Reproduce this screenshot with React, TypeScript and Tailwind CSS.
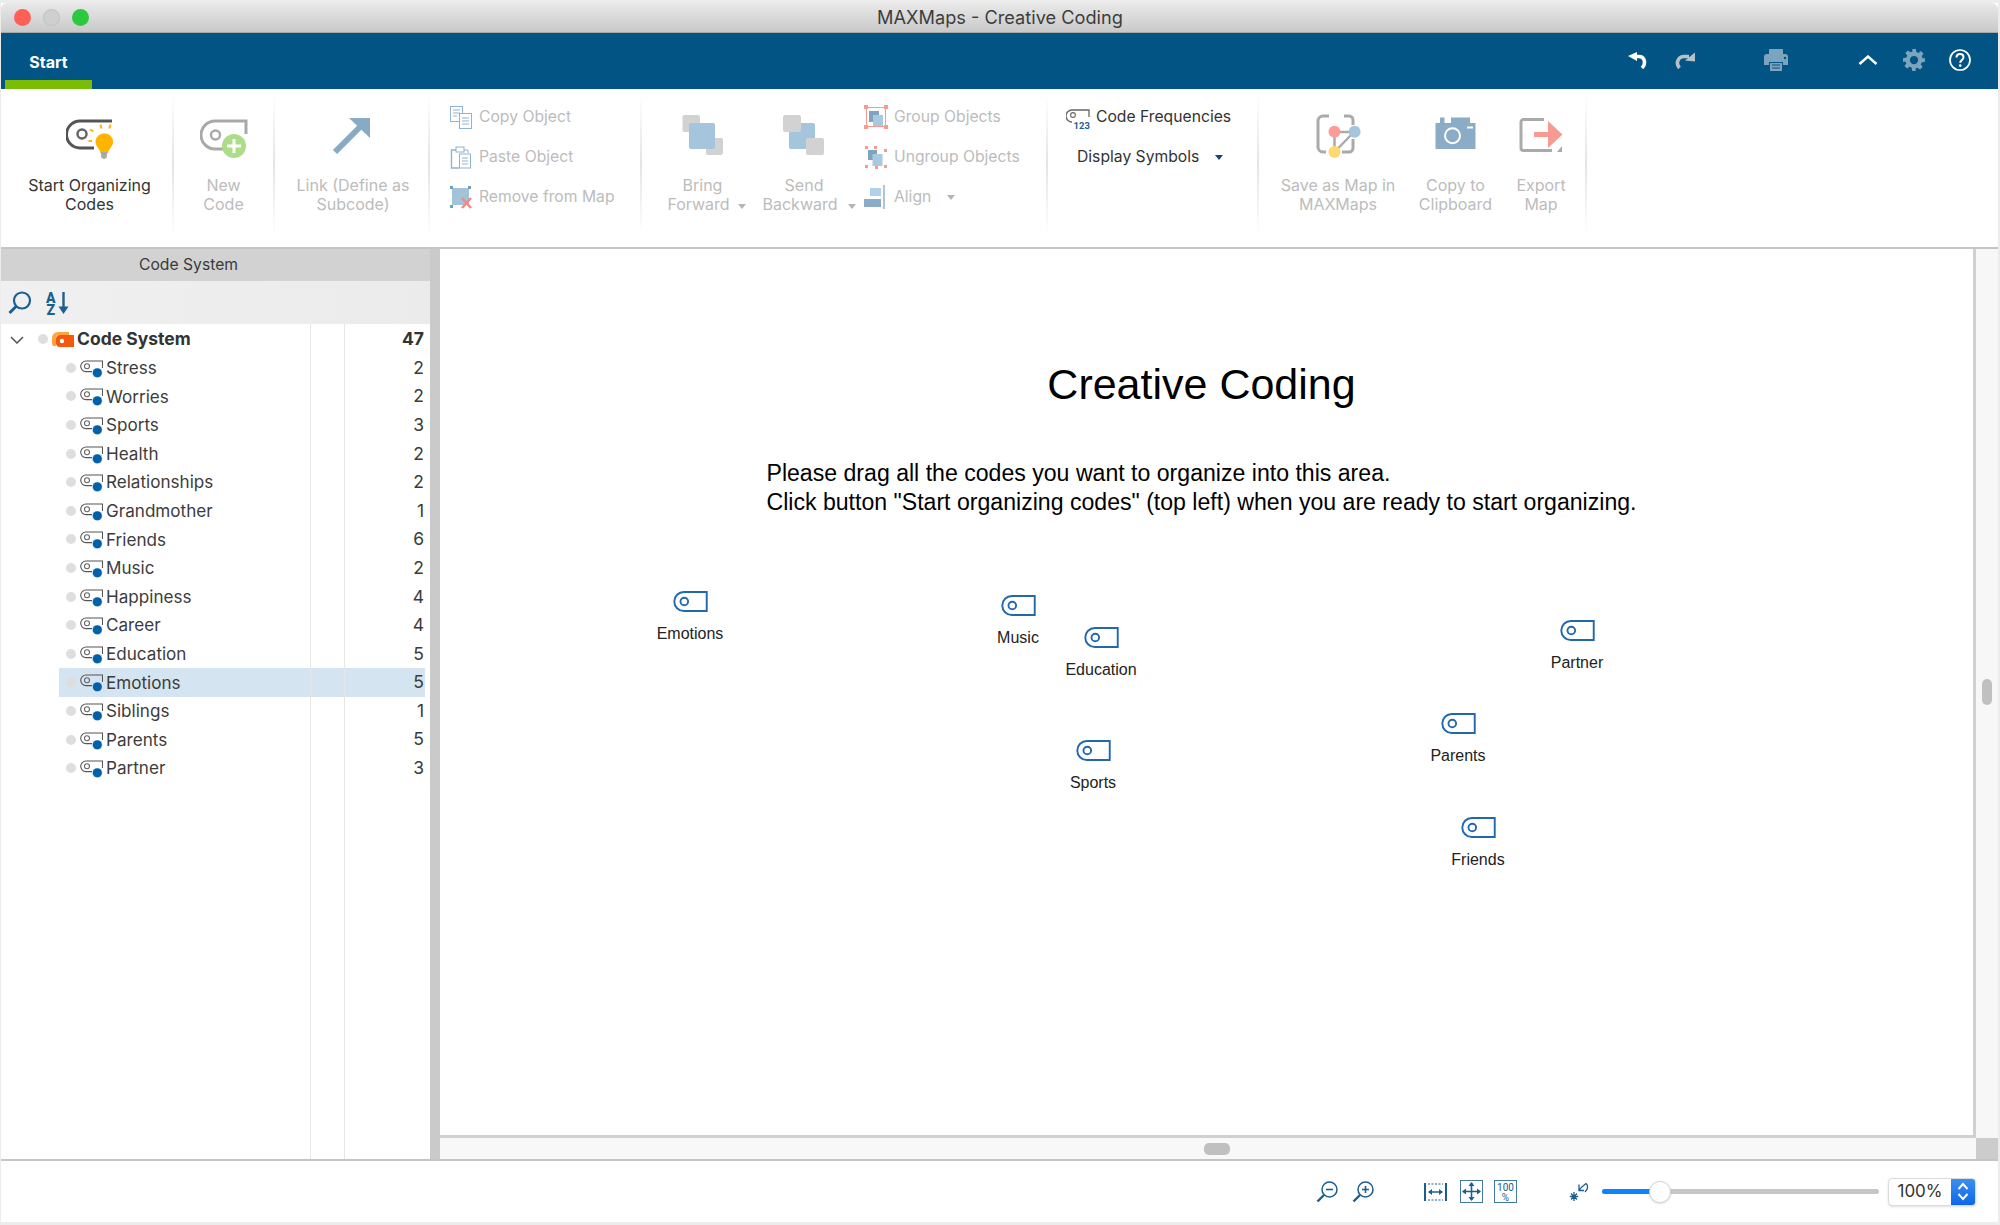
import React from "react";

const dis = "text-[#bcbcbc]";

function Sep() {
  return <div className="w-[2px] self-stretch my-[5px] mb-[12px] bg-gradient-to-b from-white via-[#e4e4e4] to-white shrink-0" />;
}

function Caret({ color = "#b5b5b5", className = "" }: { color?: string; className?: string }) {
  return (
    <svg width="8" height="5" viewBox="0 0 8 5" className={className}>
      <path d="M0 0H8L4 5Z" fill={color} />
    </svg>
  );
}

function Large({ w, icon, lines, dark, extra }: { w: string; icon: React.ReactNode; lines: React.ReactNode[]; dark?: boolean; extra?: string }) {
  return (
    <div className={`${w} ${extra ?? ""} shrink-0 flex flex-col items-center pt-[25px] text-[16px] leading-[19px] ${dark ? "text-[#333]" : dis}`}>
      <div className="h-[48px] w-[48px] mb-[14px]">{icon}</div>
      {lines.map((l, i) => (
        <div key={i} className="whitespace-nowrap">{l}</div>
      ))}
    </div>
  );
}

function Small({ icon, label, dark, caret }: { icon: React.ReactNode; label: string; dark?: boolean; caret?: boolean }) {
  return (
    <div className={`h-[40px] flex items-center text-[15.7px] whitespace-nowrap ${dark ? "text-[#333]" : dis}`}>
      <div className="w-[24px] h-[24px] mr-[6px] shrink-0">{icon}</div>
      <span>{label}</span>
      {caret && <Caret className="ml-[16px]" />}
    </div>
  );
}

const S = ({ children, w = 48 }: { children: React.ReactNode; w?: number }) => (
  <svg width={w} height={w} viewBox={`0 0 ${w} ${w}`} className="block" fill="none">{children}</svg>
);

const IconStart = () => (
  <S>
    <path d="M46 7H14a13.5 13.5 0 0 0 0 27H28" stroke="#555" strokeWidth="3" />
    <circle cx="16" cy="20" r="4.5" stroke="#666" strokeWidth="2.5" />
    <path d="M34.5 10.5l.8 4M44.5 10.5l-1.2 4M24 15.5l3.5 2M22.5 27h3.5" stroke="#ffb400" strokeWidth="2" />
    <path d="M29.5 28a8.8 8.8 0 1 1 17.6 0c0 4-4 6-5 11h-7.6c-1-5-5-7-5-11z" fill="#ffb400" />
    <path d="M34.5 38h7l-1 6-2.5 1-2.5-1z" fill="#a8a8a8" />
  </S>
);
const IconNew = () => (
  <S>
    <path d="M46 20V7H15a14 14 0 0 0 0 28H24" stroke="#a9a9a9" strokeWidth="3" />
    <circle cx="15.5" cy="21" r="4.5" stroke="#a9a9a9" strokeWidth="2.5" />
    <circle cx="34" cy="32" r="12" fill="#aedd8a" />
    <path d="M34 25v14M27 32h14" stroke="#fff" strokeWidth="3" />
  </S>
);
const IconLink = () => (
  <S>
    <path d="M6 38L33 11" stroke="#88abc5" strokeWidth="6" />
    <path d="M20 4H41V24Z" fill="#88abc5" />
  </S>
);
const IconBring = () => (
  <S>
    <rect x="3.5" y="1" width="17.5" height="17" rx="2" fill="#d2d2d2" />
    <rect x="27" y="24" width="17" height="17" rx="2" fill="#d2d2d2" />
    <rect x="10" y="9" width="26" height="26" rx="2" fill="#a5c5dc" />
  </S>
);
const IconSend = () => (
  <S>
    <rect x="9" y="9" width="26" height="26" rx="2" fill="#a5c5dc" />
    <rect x="3" y="1" width="18" height="17" rx="2" fill="#d2d2d2" />
    <rect x="26" y="24" width="18" height="17" rx="2" fill="#d2d2d2" />
  </S>
);
const IconMap = () => (
  <S>
    <path d="M15 2H9a5 5 0 0 0-5 5V33a5 5 0 0 0 5 5h3M30 2h5a4 4 0 0 1 4 4v5M39 25v9a4 4 0 0 1-4 4H28" stroke="#aaa" strokeWidth="3" />
    <path d="M20.5 18H40M20.5 18V38M40 18L20.5 38" stroke="#aaa" strokeWidth="2.5" />
    <circle cx="20.5" cy="17.7" r="6" fill="#fb9c98" />
    <circle cx="40.6" cy="17.7" r="6" fill="#a5c5dc" />
    <circle cx="20.5" cy="38" r="6" fill="#ffd870" />
  </S>
);
const IconCam = () => (
  <S>
    <path d="M3.5 9H8V3.5H12.5V9H19V3.5H38V9H43.5V35H3.5Z" fill="#8aacc7" />
    <circle cx="20.5" cy="21.7" r="7.5" stroke="#fff" strokeWidth="2" />
    <rect x="35" y="12.5" width="6" height="2" fill="#fff" />
  </S>
);
const IconExport = () => (
  <S>
    <path d="M27 5.5H6.5a2.5 2.5 0 0 0-2.5 2.5V34a2.5 2.5 0 0 0 2.5 2.5H35" stroke="#aaa" strokeWidth="3" />
    <path d="M40 38l5-6v6z" fill="#aaa" />
    <path d="M17 18H31V7L45.5 20.5L31 34V23H17Z" fill="#f89a92" />
  </S>
);

const s1 = "#8fb3d0";
const IconCopy = () => (
  <S w={24}>
    <rect x="1.5" y="1.5" width="12" height="15" stroke={s1} />
    <path d="M4 5h7M4 8h7M4 11h4" stroke={s1} />
    <rect x="10.5" y="8.5" width="12" height="15" fill="#fff" stroke={s1} />
    <path d="M13 13h7M13 16h7M13 19h7" stroke={s1} />
  </S>
);
const IconPaste = () => (
  <S w={24}>
    <path d="M7 5H2.5V23H10" stroke={s1} strokeWidth="1.4" />
    <rect x="7" y="2" width="8" height="5" stroke={s1} />
    <path d="M15 5h4v3" stroke={s1} />
    <rect x="10.5" y="9" width="11" height="14" fill="#fff" stroke={s1} />
    <path d="M13 13h6M13 16h6M13 19h6" stroke={s1} />
  </S>
);
const IconRemove = () => (
  <S w={24}>
    <rect x="3" y="3" width="17" height="17" fill="#a3c3da" />
    <path d="M1 1h3v3H1zM19 1h3v3h-3zM1 20h3v3H1z" fill="#6f9ec0" />
    <path d="M13 13l9 10M22 13l-9 10" stroke="#f28b84" strokeWidth="2.6" />
  </S>
);
const IconGroup = () => (
  <S w={24}>
    <rect x="2.5" y="2.5" width="19" height="19" stroke="#f89a92" />
    <path d="M0 0h4v4H0zM20 0h4v4h-4zM0 20h4v4H0zM20 20h4v4h-4z" fill="#f89a92" />
    <rect x="5" y="6" width="10" height="11" fill="#7fa4c0" />
    <rect x="9" y="10" width="10" height="11" fill="#a8c9df" />
  </S>
);
const IconUngroup = () => (
  <S w={24}>
    <path d="M1 1h3v3H1zM10 1h3v3h-3zM20 4h3v3h-3zM1 20h3v3H1zM11 21h3v3h-3zM20 20h3v3h-3z" fill="#f89a92" />
    <rect x="4" y="5" width="9" height="10" fill="#7fa4c0" />
    <rect x="8.5" y="9" width="10" height="12" fill="#a8c9df" />
  </S>
);
const IconAlign = () => (
  <S w={24}>
    <rect x="6" y="3" width="11" height="8" fill="#b0d2e8" />
    <rect x="0" y="14" width="17" height="8" fill="#8aacc7" />
    <path d="M20 0V24" stroke="#9cb6cc" strokeWidth="1.6" />
  </S>
);
const IconFreq = () => (
  <svg width="24" height="24" viewBox="0 0 24 24" fill="none" className="block">
    <path d="M23 12V5H6a4.5 4.5 0 0 0 0 12" stroke="#666" strokeWidth="1.3" />
    <circle cx="7" cy="10" r="2.4" stroke="#666" strokeWidth="1.1" />
    <text x="7.5" y="23.5" fontSize="9.5" fontWeight="700" fill="#1f5f92" fontFamily="Roboto, sans-serif">123</text>
  </svg>
);

function TagChild() {
  return (
    <svg width="23" height="18" viewBox="0 0 23 18" className="block shrink-0 mt-[2px]" fill="none">
      <path d="M22.5 8V1H6a5.2 5.2 0 0 0 0 10.6H12" stroke="#555" strokeWidth="1.1" />
      <circle cx="7" cy="6.2" r="2.5" stroke="#666" strokeWidth="1.1" />
      <circle cx="17.3" cy="12.8" r="4.9" fill="#0060aa" stroke="#fff" strokeWidth="0.5" />
    </svg>
  );
}

const rows: [string, number][] = [
  ["Stress", 2], ["Worries", 2], ["Sports", 3], ["Health", 2], ["Relationships", 2],
  ["Grandmother", 1], ["Friends", 6], ["Music", 2], ["Happiness", 4], ["Career", 4],
  ["Education", 5], ["Emotions", 5], ["Siblings", 1], ["Parents", 5], ["Partner", 3],
];

const nodes: [string, number, number][] = [
  ["Emotions", 690, 601],
  ["Music", 1018, 605],
  ["Education", 1101, 637],
  ["Sports", 1093, 750],
  ["Partner", 1577, 630],
  ["Parents", 1458, 723],
  ["Friends", 1478, 827],
];

const Dot = () => <span className="block w-[10px] h-[10px] rounded-full bg-[#dedede] shrink-0" />;

const rowH = "h-[28.6px]";

function Tree() {
  return (
    <div className="flex-1 flex bg-white">
      <div className="w-[309px] pt-[1px] text-[17.1px] text-[#3c3c3c]">
        <div className={`${rowH} flex items-center`}>
          <svg width="14" height="8" viewBox="0 0 14 8" className="ml-[9px] mt-[2px]" fill="none">
            <path d="M1 1l6 6 6-6" stroke="#555" strokeWidth="1.5" />
          </svg>
          <span className="ml-[14px]"><Dot /></span>
          <svg width="22" height="16" viewBox="0 0 22 16" className="ml-[4px] shrink-0">
            <path d="M0 7a6 6 0 0 1 6-6H17V4H7a3 3 0 0 0-3 3v8H2a2 2 0 0 1-2-2z" fill="#ffa33a" />
            <path d="M4 8a4 4 0 0 1 4-4H22V16H8a4 4 0 0 1-4-4z" fill="#f2590f" />
            <circle cx="10" cy="10" r="2.2" fill="#fff" />
          </svg>
          <span className="ml-[3px] font-bold text-[#333] text-[17.5px]">Code System</span>
        </div>
        {rows.map(([n]) => (
          <div key={n} className={`${rowH} ml-[58px] flex items-center ${n === "Emotions" ? "bg-[#d5e4f1]" : ""}`}>
            <span className="ml-[7px]"><Dot /></span>
            <span className="ml-[4px]"><TagChild /></span>
            <span className="ml-[3px]">{n}</span>
          </div>
        ))}
      </div>
      <div className="w-[34px] border-l border-[#e6e6e6] pt-[1px]">
        <div className={rowH} />
        {rows.map(([n]) => (
          <div key={n} className={`${rowH} ${n === "Emotions" ? "bg-[#d5e4f1]" : ""}`} />
        ))}
      </div>
      <div className="flex-1 border-l border-[#e6e6e6] pt-[1px] text-[17.5px] text-[#3c3c3c]">
        <div className={`${rowH} flex items-center justify-end pr-[6px] font-bold text-[#333]`}>47</div>
        {rows.map(([n, c]) => (
          <div key={n} className={`${rowH} mr-[5px] pr-[1px] flex items-center justify-end ${n === "Emotions" ? "bg-[#d5e4f1]" : ""}`}>{c}</div>
        ))}
      </div>
    </div>
  );
}

const zb = "#1c5f8f";

export default function App() {
  return (
    <div className="w-[2000px] h-[1225px] overflow-hidden bg-[#ececec] pt-[3px] pb-[3px] pl-[1px] pr-[2px] font-['Inter',sans-serif]">
      <div className="h-full flex flex-col bg-white">
        {/* Title bar */}
        <div className="h-[30px] shrink-0 flex items-center relative rounded-t-[6px] bg-gradient-to-b from-[#e9e9e9] to-[#c9c9c9] border-b border-[#a8a8a8]">
          <div className="flex items-center gap-[12px] pl-[13px]">
            <span className="w-[17px] h-[17px] rounded-full bg-[#fe5f57]" />
            <span className="w-[17px] h-[17px] rounded-full bg-[#cfcfcf] border border-[#c0c0c0]" />
            <span className="w-[17px] h-[17px] rounded-full bg-[#2bc840]" />
          </div>
          <div className="flex-1 text-center text-[18.2px] text-[#3d3d3d] pr-[87px]">MAXMaps - Creative Coding</div>
        </div>
        {/* Blue ribbon tab bar */}
        <div className="h-[56px] shrink-0 bg-[#015483] flex items-stretch text-white">
          <div className="ml-[4px] w-[87px] flex items-center justify-center border-b-[9px] border-[#7bbd05] font-bold text-[16px]">
            <span className="mt-[11px]">Start</span>
          </div>
          <div className="flex-1 flex items-center justify-end pr-[27px] pb-[2px]">
            <svg width="20" height="17" viewBox="0 0 20 17" className="mr-[27px]" fill="none">
              <path d="M0 4L9 0V9Z" fill="#fff" />
              <path d="M6 4.5h5c5.5 0 7.5 7 3 11.5" stroke="#fff" strokeWidth="3.6" />
            </svg>
            <svg width="20" height="17" viewBox="0 0 20 17" className="mr-[69px]" fill="none">
              <path d="M20 0.5V9.5L10 8.5Z" fill="#b7c1c8" />
              <path d="M14 4.5H9C3.5 4.5 0 11 4.5 16" stroke="#b7c1c8" strokeWidth="3.6" />
            </svg>
            <svg width="24" height="22" viewBox="0 0 24 22" className="mr-[70px]">
              <path d="M5 5V0H19V5H21a3 3 0 0 1 3 3V16H19V13H5V16H0V8a3 3 0 0 1 3-3Z" fill="#7ea4bd" />
              <path d="M6 14H18V22H6Z" fill="#7ea4bd" />
              <path d="M8 16h8M8 19h8" stroke="#015483" strokeWidth="1.2" />
              <circle cx="21" cy="9" r="1.2" fill="#015483" />
            </svg>
            <svg width="20" height="10" viewBox="0 0 20 10" className="mr-[25px]" fill="none">
              <path d="M1.5 9L10 1.5 18.5 9" stroke="#fff" strokeWidth="2.4" />
            </svg>
            <svg width="22" height="22" viewBox="0 0 24 24" className="mr-[24px]">
              <path fill="#7ea4bd" fillRule="evenodd" d="M10 0h4l.6 3.4 2.2.9 2.8-2 2.8 2.8-2 2.8.9 2.2L24 10v4l-3.7.6-.9 2.2 2 2.8-2.8 2.8-2.8-2-2.2.9L14 24h-4l-.6-3.7-2.2-.9-2.8 2-2.8-2.8 2-2.8-.9-2.2L0 14v-4l3.7-.6.9-2.2-2-2.8 2.8-2.8 2.8 2 2.2-.9ZM12 7.5a4.5 4.5 0 1 0 0 9 4.5 4.5 0 0 0 0-9Z" />
            </svg>
            <svg width="22" height="22" viewBox="0 0 22 22" fill="none">
              <circle cx="11" cy="11" r="10" stroke="#fff" strokeWidth="1.7" />
              <path d="M7.5 8.5C7.5 6 9 5 11 5s3.5 1.3 3.5 3.2c0 2.6-3.3 2.8-3.3 5.6" stroke="#fff" strokeWidth="2" />
              <circle cx="11.2" cy="16.6" r="1.3" fill="#fff" />
            </svg>
          </div>
        </div>
        {/* Ribbon */}
        <div className="h-[160px] shrink-0 flex border-b-2 border-[#c4c4c4]">
          <Large w="w-[171px]" extra="pl-[6px]" dark icon={<IconStart />} lines={["Start Organizing", "Codes"]} />
          <Sep />
          <Large w="w-[99px]" icon={<IconNew />} lines={["New", "Code"]} />
          <Sep />
          <Large w="w-[153px]" extra="pl-[3px]" icon={<IconLink />} lines={["Link (Define as", "Subcode)"]} />
          <Sep />
          <div className="w-[210px] shrink-0 pl-[19px] pt-[8px]">
            <Small icon={<IconCopy />} label="Copy Object" />
            <Small icon={<IconPaste />} label="Paste Object" />
            <Small icon={<IconRemove />} label="Remove from Map" />
          </div>
          <Sep />
          <Large w="w-[121px]" icon={<IconBring />} lines={["Bring", <span className="relative inline-block pr-[8px]">Forward<Caret className="absolute right-[-8px] top-[9px]" /></span>]} />
          <Large w="w-[82px]" icon={<IconSend />} lines={["Send", <span className="relative inline-block pr-[8px]">Backward<Caret className="absolute right-[-10px] top-[9px]" /></span>]} />
          <div className="w-[201px] shrink-0 pl-[19px] pt-[8px]">
            <Small icon={<IconGroup />} label="Group Objects" />
            <Small icon={<IconUngroup />} label="Ungroup Objects" />
            <Small icon={<IconAlign />} label="Align" caret />
          </div>
          <Sep />
          <div className="w-[209px] shrink-0 pl-[18px] pt-[8px] text-[#333]">
            <Small dark icon={<IconFreq />} label="Code Frequencies" />
            <div className="h-[40px] pl-[11px] flex items-center text-[15.7px] whitespace-nowrap">
              Display Symbols
              <Caret color="#15467a" className="ml-[16px]" />
            </div>
          </div>
          <Sep />
          <Large w="w-[158px]" icon={<IconMap />} lines={["Save as Map in", "MAXMaps"]} />
          <Large w="w-[77px]" icon={<IconCam />} lines={["Copy to", "Clipboard"]} />
          <Large w="w-[91px]" extra="pl-[3px]" icon={<IconExport />} lines={["Export", "Map"]} />
          <Sep />
        </div>
        {/* Main */}
        <div className="flex-1 min-h-0 flex border-b-2 border-[#c4c4c4]">
          <div className="w-[439px] shrink-0 flex border-r-[10px] border-[#cacaca]">
            <div className="flex-1 flex flex-col">
              <div className="h-[32px] shrink-0 bg-[#d2d2d2] flex items-center justify-center pr-[54px] text-[15.7px] text-[#3a3a3a]">Code System</div>
              <div className="h-[43px] shrink-0 flex items-center bg-gradient-to-r from-[#f0f0f0] to-[#ebebeb]">
                <svg width="24" height="24" viewBox="0 0 24 24" className="ml-[7px]" fill="none">
                  <circle cx="14" cy="9.5" r="8" stroke={zb} strokeWidth="2.2" />
                  <path d="M8.5 15L1.5 22" stroke={zb} strokeWidth="3" />
                </svg>
                <svg width="24" height="28" viewBox="0 0 24 28" className="ml-[14px] mt-[4px]" fill="none">
                  <text x="0" y="11.5" fontSize="14" fontWeight="900" fill={zb} fontFamily="Roboto, sans-serif">A</text>
                  <text x="0.5" y="24" fontSize="14" fontWeight="900" fill={zb} fontFamily="Roboto, sans-serif">Z</text>
                  <path d="M17.5 1V20" stroke={zb} strokeWidth="2.4" />
                  <path d="M12.5 15.5H22.5L17.5 23Z" fill={zb} />
                </svg>
              </div>
              <Tree />
            </div>
          </div>
          <div className="flex-1 flex flex-col min-w-0">
            <div className="flex-1 min-h-0 flex">
              <div className="relative flex-1 border-r-[3px] border-b-[3px] border-[#d0d0d0] bg-white font-['Liberation_Sans',Arial,sans-serif] text-black">
                <div className="flex flex-col items-center pt-[107px] pr-[10px]">
                  <div className="text-[43px] leading-[56px]">Creative Coding</div>
                  <div className="mt-[47px] text-[23.1px] leading-[29px]">
                    <div>Please drag all the codes you want to organize into this area.</div>
                    <div>Click button "Start organizing codes" (top left) when you are ready to start organizing.</div>
                  </div>
                </div>
                {nodes.map(([n, cx, cy]) => (
                  <div
                    key={n}
                    className="absolute w-[120px] -translate-x-1/2 flex flex-col items-center text-[16px] leading-[20px] text-[#222]"
                    style={{ left: cx - 440, top: cy - 10 - 249 }}
                  >
                    <svg width="35" height="21" viewBox="0 0 36 22" fill="none" className="block">
                      <path d="M35 1H11a10 10 0 0 0 0 20H35Z" stroke="#2268ad" strokeWidth="2" />
                      <circle cx="11.5" cy="11" r="4" stroke="#2268ad" strokeWidth="2" />
                    </svg>
                    <span className="mt-[12px]">{n}</span>
                  </div>
                ))}
              </div>
              <div className="w-[22px] shrink-0 bg-[#f7f7f7] pt-[430px] pl-[6px]">
                <div className="w-[10px] h-[26px] rounded-full bg-[#c0c0c0]" />
              </div>
            </div>
            <div className="h-[21px] shrink-0 flex">
              <div className="flex-1 bg-[#f8f8f8] pl-[764px] pt-[5px]">
                <div className="w-[26px] h-[12px] rounded-[5px] bg-[#c0c0c0]" />
              </div>
              <div className="w-[22px] bg-[#cccccc]" />
            </div>
          </div>
        </div>
        {/* Status bar */}
        <div className="h-[61px] shrink-0 flex items-center justify-end pr-[22px]">
          <svg width="22" height="22" viewBox="0 0 22 22" fill="none" className="mr-[14px]">
            <circle cx="13.5" cy="8.5" r="7.5" stroke={zb} strokeWidth="1.5" />
            <path d="M10 8.5h7" stroke={zb} strokeWidth="1.6" />
            <path d="M8 14L1.5 20.5" stroke={zb} strokeWidth="2.4" />
          </svg>
          <svg width="22" height="22" viewBox="0 0 22 22" fill="none" className="mr-[50px]">
            <circle cx="13.5" cy="8.5" r="7.5" stroke={zb} strokeWidth="1.5" />
            <path d="M10 8.5h7M13.5 5v7" stroke={zb} strokeWidth="1.6" />
            <path d="M8 14L1.5 20.5" stroke={zb} strokeWidth="2.4" />
          </svg>
          <svg width="23" height="18" viewBox="0 0 23 18" fill="none" className="mr-[13px]">
            <path d="M1 0V18M22 0V18" stroke={zb} strokeWidth="2" />
            <path d="M4 1H19M4 17H19" stroke={zb} strokeWidth="1" strokeDasharray="2 1.5" />
            <path d="M5 9H18" stroke={zb} strokeWidth="1.5" />
            <path d="M4 9L8 6V12ZM19 9L15 6V12Z" fill={zb} />
          </svg>
          <svg width="23" height="23" viewBox="0 0 23 23" fill="none" className="mr-[11px]">
            <rect x="0.5" y="0.5" width="22" height="22" stroke="#3f7ba3" />
            <path d="M11.5 3V20M3 11.5H20" stroke={zb} strokeWidth="1.6" />
            <path d="M11.5 2L8.5 6H14.5ZM11.5 21L8.5 17H14.5ZM2 11.5L6 8.5V14.5ZM21 11.5L17 8.5V14.5Z" fill={zb} />
          </svg>
          <svg width="23" height="23" viewBox="0 0 23 23" fill="none" className="mr-[52px]">
            <rect x="0.5" y="0.5" width="22" height="22" stroke="#3f7ba3" />
            <text x="11.5" y="10.5" textAnchor="middle" fontSize="10" fill={zb} fontFamily="Roboto, sans-serif">100</text>
            <text x="11.5" y="20.5" textAnchor="middle" fontSize="10" fill={zb} fontFamily="Roboto, sans-serif">%</text>
          </svg>
          <svg width="20" height="20" viewBox="0 0 20 20" fill="none" className="mr-[13px]">
            <path d="M5 10V19M0.8 14.5H9.2M2 11.5L8 17.5M8 11.5L2 17.5" stroke={zb} strokeWidth="1.3" />
            <path d="M10 2.5V8.5H15M10 8.5C12 5 15 3 17 1.5C19.5 3.5 19 7 16 10" stroke={zb} strokeWidth="1.3" />
          </svg>
          <div className="relative w-[277px] h-[5px] rounded-full bg-[#c6c6c6] mr-[9px]">
            <div className="w-[58px] h-full rounded-l-full bg-[#0a84ff]" />
            <div className="absolute left-[47px] top-[-8.5px] w-[22px] h-[22px] rounded-full bg-white border border-[#d4d4d4] shadow-sm" />
          </div>
          <div className="flex h-[28px] w-[88px] rounded-[4px] border border-[#dcdcdc] shadow-sm bg-white overflow-hidden">
            <div className="flex-1 flex items-center justify-center text-[17px] text-[#333]">100%</div>
            <div className="w-[24px] bg-gradient-to-b from-[#3b8ff0] to-[#0a66ea] flex flex-col items-center justify-center gap-[3px]">
              <svg width="12" height="8" viewBox="0 0 12 8" fill="none"><path d="M1.5 7L6 2l4.5 5" stroke="#fff" strokeWidth="1.9" /></svg>
              <svg width="12" height="8" viewBox="0 0 12 8" fill="none"><path d="M1.5 1L6 6l4.5-5" stroke="#fff" strokeWidth="1.9" /></svg>
            </div>
          </div>
        </div>
      </div>
    </div>
  );
}
